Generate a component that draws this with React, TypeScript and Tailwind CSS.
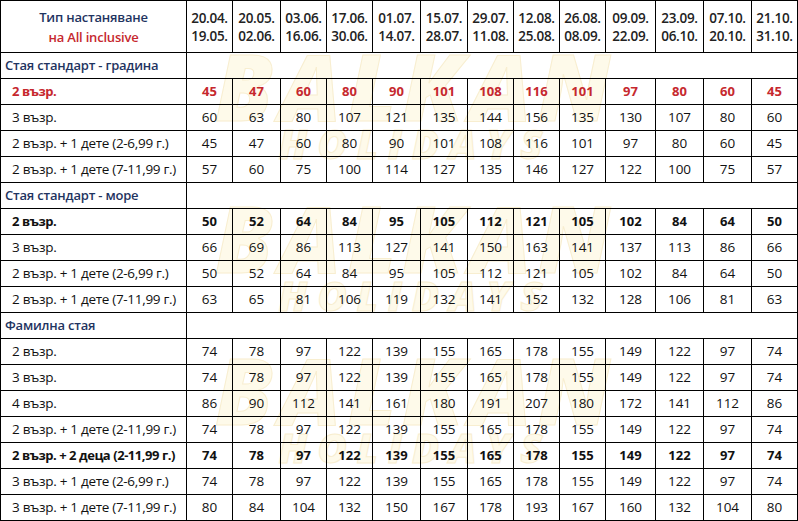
import React from 'react';

type Row = { label: string; values: number[]; tone?: 'red' | 'bold' };
type Group = { title: string; rows: Row[] };

const periods = [
  ['20.04.', '19.05.'],
  ['20.05.', '02.06.'],
  ['03.06.', '16.06.'],
  ['17.06.', '30.06.'],
  ['01.07.', '14.07.'],
  ['15.07.', '28.07.'],
  ['29.07.', '11.08.'],
  ['12.08.', '25.08.'],
  ['26.08.', '08.09.'],
  ['09.09.', '22.09.'],
  ['23.09.', '06.10.'],
  ['07.10.', '20.10.'],
  ['21.10.', '31.10.'],
];

const colWidths = [186, 46, 48, 46, 46, 48, 47, 46, 46, 46, 50, 48, 48, 46];

const family = [74, 78, 97, 122, 139, 155, 165, 178, 155, 149, 122, 97, 74];

const groups: Group[] = [
  {
    title: 'Стая стандарт - градина',
    rows: [
      { label: '2 възр.', values: [45, 47, 60, 80, 90, 101, 108, 116, 101, 97, 80, 60, 45], tone: 'red' },
      { label: '3 възр.', values: [60, 63, 80, 107, 121, 135, 144, 156, 135, 130, 107, 80, 60] },
      { label: '2 възр. + 1 дете (2-6,99 г.)', values: [45, 47, 60, 80, 90, 101, 108, 116, 101, 97, 80, 60, 45] },
      { label: '2 възр. + 1 дете (7-11,99 г.)', values: [57, 60, 75, 100, 114, 127, 135, 146, 127, 122, 100, 75, 57] },
    ],
  },
  {
    title: 'Стая стандарт - море',
    rows: [
      { label: '2 възр.', values: [50, 52, 64, 84, 95, 105, 112, 121, 105, 102, 84, 64, 50], tone: 'bold' },
      { label: '3 възр.', values: [66, 69, 86, 113, 127, 141, 150, 163, 141, 137, 113, 86, 66] },
      { label: '2 възр. + 1 дете (2-6,99 г.)', values: [50, 52, 64, 84, 95, 105, 112, 121, 105, 102, 84, 64, 50] },
      { label: '2 възр. + 1 дете (7-11,99 г.)', values: [63, 65, 81, 106, 119, 132, 141, 152, 132, 128, 106, 81, 63] },
    ],
  },
  {
    title: 'Фамилна стая',
    rows: [
      { label: '2 възр.', values: family },
      { label: '3 възр.', values: family },
      { label: '4 възр.', values: [86, 90, 112, 141, 161, 180, 191, 207, 180, 172, 141, 112, 86] },
      { label: '2 възр. + 1 дете (2-11,99 г.)', values: family },
      { label: '2 възр. + 2 деца (2-11,99 г.)', values: family, tone: 'bold' },
      { label: '3 възр. + 1 дете (2-6,99 г.)', values: family },
      { label: '3 възр. + 1 дете (7-11,99 г.)', values: [80, 84, 104, 132, 150, 167, 178, 193, 167, 160, 132, 104, 80] },
    ],
  },
];

// faint logo stamp repeated down the table
function Watermark({ top }: { top: number }) {
  return (
    <div className="absolute left-[215px] flex flex-col items-center" style={{ top }}>
      <div className="text-[92px] leading-none font-black italic tracking-[6px] text-[#fefaea] [-webkit-text-stroke:1px_#f8eed0]">
        BALKAN
      </div>
      <div className="-mt-2 text-[40px] leading-none font-black italic tracking-[10px] text-[#fefaea] [-webkit-text-stroke:1px_#f8eed0]">
        HOLIDAYS
      </div>
    </div>
  );
}

export default function App() {
  return (
    <div className="relative w-[798px] h-[521px] overflow-hidden bg-white font-['Open_Sans',sans-serif] text-[13.5px] text-[#111]">
      <div className="pointer-events-none absolute inset-0 z-0">
        <Watermark top={40} />
        <Watermark top={192} />
        <Watermark top={344} />
      </div>

      <table className="relative z-10 table-fixed border-collapse w-[798px]">
        <colgroup>
          {colWidths.map((w, i) => (
            <col key={i} style={{ width: w }} />
          ))}
        </colgroup>
        <thead>
          <tr className="h-[52px]">
            <th className="border border-black text-center font-semibold text-[13px] leading-[20px] tracking-[-0.2px]">
              <div className="text-[#1f3461]">Тип настаняване</div>
              <div className="text-[#c6282e]">на All inclusive</div>
            </th>
            {periods.map(([a, b]) => (
              <th key={a} className="border border-black text-center font-semibold text-[13.5px] leading-[18px] tracking-[-0.3px] text-[#222]">
                <div>{a}</div>
                <div>{b}</div>
              </th>
            ))}
          </tr>
        </thead>
        <tbody>
          {groups.map((g) => (
            <React.Fragment key={g.title}>
              <tr className="h-[26px]">
                <td className="border border-black pl-[4px] font-semibold text-[13px] tracking-[-0.2px] text-[#1f3461]">{g.title}</td>
                <td colSpan={13} className="border border-black" />
              </tr>
              {g.rows.map((r, ri) => {
                const tone =
                  r.tone === 'red'
                    ? 'font-bold text-[#c6282e]'
                    : r.tone === 'bold'
                    ? 'font-bold text-[#111]'
                    : '';
                return (
                  <tr key={ri} className="h-[26px]">
                    <td
                      className={`border border-black pl-[11px] whitespace-nowrap ${
                        r.tone ? `text-[13px] tracking-[-0.45px] ${tone}` : 'text-[13.5px] tracking-[-0.3px]'
                      }`}
                    >
                      {r.label}
                    </td>
                    {r.values.map((v, vi) => (
                      <td key={vi} className={`border border-black text-center ${r.tone ? `text-[13px] ${tone}` : ''}`}>
                        {v}
                      </td>
                    ))}
                  </tr>
                );
              })}
            </React.Fragment>
          ))}
        </tbody>
      </table>
    </div>
  );
}
